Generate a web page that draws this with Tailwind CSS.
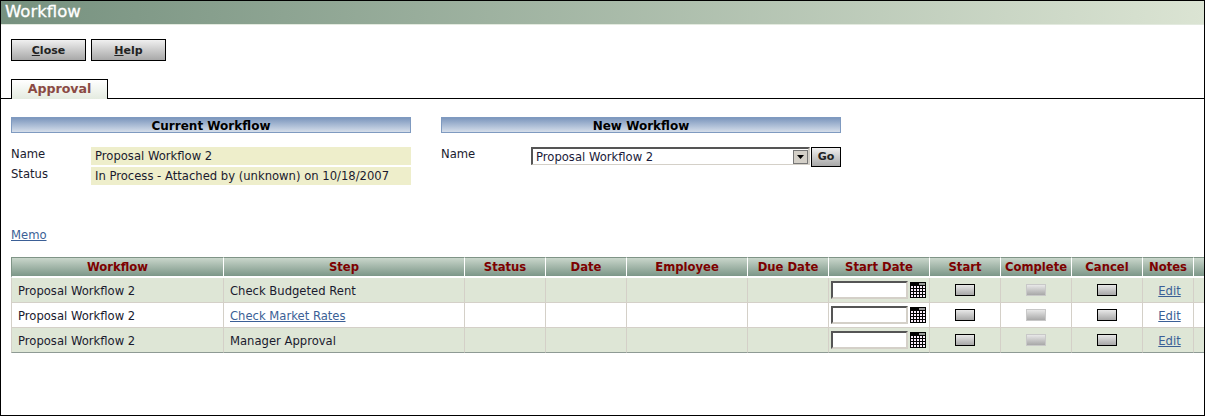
<!doctype html>
<html>
<head>
  <meta charset="UTF-8">
  <script src="https://cdn.jsdelivr.net/npm/@tailwindcss/browser@4"></script>
</head>
<body class="bg-white overflow-hidden">
<div class="w-[1205px] h-[416px] border border-black overflow-hidden font-['DejaVu_Sans',sans-serif] text-[11.6px] text-[#1a1a2e]">
  <div class="h-[24px] pl-[4px] bg-gradient-to-r from-[#76917f] to-[#dbe4d3] border-b border-[#e3eadf] text-white text-[16.5px] leading-[22px] [-webkit-text-stroke:0.3px_white]">Workflow</div>

  <div class="flex gap-[5px] pl-[10px] pt-[14px]">
    <button class="w-[75px] h-[22px] pt-[2px] border border-black bg-gradient-to-b from-[#f0f0f0] to-[#a8a8a8] text-[11px] font-bold text-[#222]"><u>C</u>lose</button>
    <button class="w-[75px] h-[22px] pt-[2px] border border-black bg-gradient-to-b from-[#f0f0f0] to-[#a8a8a8] text-[11px] font-bold text-[#222]"><u>H</u>elp</button>
  </div>

  <div class="mt-[18px] h-[20px] border-b border-black pl-[10px]">
    <div class="w-[97px] h-[20px] border border-black border-b-0 bg-gradient-to-b from-white to-[#e4ebe0] text-center text-[12.6px] font-bold leading-[18px] text-[#8a4a44]">Approval</div>
  </div>

  <div class="flex gap-[30px] pl-[10px] pt-[18px]">
    <div class="w-[400px]">
      <div class="h-[16px] bg-gradient-to-b from-[#7d97bd] to-[#d5deea] border border-[#7f9ac0] text-center text-[12px] font-bold leading-[16px] text-black">Current Workflow</div>
      <div class="flex mt-[14px] h-[18px]">
        <div class="w-[80px] leading-[14px]">Name</div>
        <div class="flex-1 bg-[#eeeecb] pl-[4px] leading-[18px]">Proposal Workflow 2</div>
      </div>
      <div class="flex mt-[2px] h-[18px]">
        <div class="w-[80px] leading-[14px]">Status</div>
        <div class="flex-1 bg-[#eeeecb] pl-[4px] leading-[18px]">In Process - Attached by (unknown) on 10/18/2007</div>
      </div>
    </div>
    <div class="w-[400px]">
      <div class="h-[16px] bg-gradient-to-b from-[#7d97bd] to-[#d5deea] border border-[#7f9ac0] text-center text-[12px] font-bold leading-[16px] text-black">New Workflow</div>
      <div class="flex mt-[14px] h-[20px]">
        <div class="w-[90px] leading-[14px]">Name</div>
        <div class="w-[279px] h-[18px] flex items-center justify-between border-2 border-[#555] border-r-[#d4d0c8] border-b-[#d4d0c8] border-b pl-[3px] text-[#1a1a3a]">
          <span class="pt-[3px]">Proposal Workflow 2</span>
          <span class="w-[15px] h-[14px] flex items-center justify-center bg-[#d4d0c8] border border-[#777]">
            <svg width="7" height="4" viewBox="0 0 7 4"><path d="M0 0h7L3.5 4z" fill="#000"/></svg>
          </span>
        </div>
        <button class="ml-[1px] w-[30px] h-[20px] border border-black bg-gradient-to-b from-[#f0f0f0] to-[#a8a8a8] text-[11px] font-bold text-[#222]">Go</button>
      </div>
    </div>
  </div>

  <div class="mt-[43px] ml-[10px] h-[14px] leading-[14px]"><a class="text-[#3b5f96] underline">Memo</a></div>

  <table class="mt-[15px] ml-[10px] w-[1194px] table-fixed border-separate border-spacing-0">
    <colgroup>
      <col class="w-[213px]"><col class="w-[241px]"><col class="w-[81px]"><col class="w-[81px]"><col class="w-[121px]"><col class="w-[81px]"><col class="w-[101px]"><col class="w-[71px]"><col class="w-[71px]"><col class="w-[71px]"><col class="w-[51px]"><col class="w-[11px]">
    </colgroup>
    <thead>
      <tr class="h-[20px] text-[#7d0000] font-bold">
        <th class="pt-[1px] border-t border-b-2 border-l border-r border-t-[#7f9486] border-b-white border-l-[#7f9486] border-r-white bg-gradient-to-b from-[#c9d6cb] to-[#7c9788]">Workflow</th>
        <th class="pt-[1px] border-t border-b-2 border-r border-t-[#7f9486] border-b-white border-r-white bg-gradient-to-b from-[#c9d6cb] to-[#7c9788]">Step</th>
        <th class="pt-[1px] border-t border-b-2 border-r border-t-[#7f9486] border-b-white border-r-white bg-gradient-to-b from-[#c9d6cb] to-[#7c9788]">Status</th>
        <th class="pt-[1px] border-t border-b-2 border-r border-t-[#7f9486] border-b-white border-r-white bg-gradient-to-b from-[#c9d6cb] to-[#7c9788]">Date</th>
        <th class="pt-[1px] border-t border-b-2 border-r border-t-[#7f9486] border-b-white border-r-white bg-gradient-to-b from-[#c9d6cb] to-[#7c9788]">Employee</th>
        <th class="pt-[1px] border-t border-b-2 border-r border-t-[#7f9486] border-b-white border-r-white bg-gradient-to-b from-[#c9d6cb] to-[#7c9788]">Due Date</th>
        <th class="pt-[1px] border-t border-b-2 border-r border-t-[#7f9486] border-b-white border-r-white bg-gradient-to-b from-[#c9d6cb] to-[#7c9788]">Start Date</th>
        <th class="pt-[1px] border-t border-b-2 border-r border-t-[#7f9486] border-b-white border-r-white bg-gradient-to-b from-[#c9d6cb] to-[#7c9788]">Start</th>
        <th class="pt-[1px] border-t border-b-2 border-r border-t-[#7f9486] border-b-white border-r-white bg-gradient-to-b from-[#c9d6cb] to-[#7c9788]">Complete</th>
        <th class="pt-[1px] border-t border-b-2 border-r border-t-[#7f9486] border-b-white border-r-white bg-gradient-to-b from-[#c9d6cb] to-[#7c9788]">Cancel</th>
        <th class="pt-[1px] border-t border-b-2 border-r border-t-[#7f9486] border-b-white border-r-white bg-gradient-to-b from-[#c9d6cb] to-[#7c9788]">Notes</th>
        <th class="border-t border-b-2 border-t-[#7f9486] border-b-white bg-gradient-to-b from-[#c9d6cb] to-[#7c9788]"></th>
      </tr>
    </thead>
    <tbody id="rows"></tbody>
  </table>
</div>
<script>
  const tbody = document.querySelector('#rows');
  const cal = `<svg class="inline-block align-middle ml-[2px]" width="16" height="16" viewBox="0 0 16 16"><rect width="16" height="16" fill="#000"/><rect x="9" y="1" width="6" height="2" fill="#999"/>` +
    [4,7,10,13].map(y => [1,4,7,10,13].map(x => `<rect x="${x}" y="${y}" width="2" height="2" fill="#fbeefb"/>`).join('')).join('') + `</svg>`;
  const field = `<span class="inline-block align-middle w-[77px] h-[18px] bg-white border-2 border-[#555] border-r-[#d4d0c8] border-b-[#d4d0c8]"></span>`;
  const action = `<span class="block mx-auto w-[20px] h-[12px] border border-black bg-gradient-to-b from-[#e8e8e8] to-[#a8a8a8]"></span>`;
  const disabled = `<span class="block mx-auto w-[20px] h-[12px] border border-[#c8c8c8] bg-gradient-to-b from-[#e8e8e8] to-[#a8a8a8]"></span>`;
  [['Check Budgeted Rent', 'bg-[#dee6d6]', 'border-b-[#d4d0c8]'],
   ['<a class="text-[#3b5f96] underline">Check Market Rates</a>', 'bg-white', 'border-b-[#d4d0c8]'],
   ['Manager Approval', 'bg-[#dee6d6]', 'border-b-[#8e9a94]']].forEach(([step, bg, line]) => {
    const tr = document.createElement('tr');
    tr.className = 'h-[25px] ' + bg;
    const cls = `border-r border-b border-r-[#d4d0c8] ${line} `;
    tr.innerHTML = `
      <td class="${cls} border-l border-l-[#d4d0c8] pl-[6px] pt-[2px]">Proposal Workflow 2</td>
      <td class="${cls} pl-[6px] pt-[2px]">${step}</td>
      <td class="${cls}"></td><td class="${cls}"></td><td class="${cls}"></td><td class="${cls}"></td>
      <td class="${cls} pl-[2px] whitespace-nowrap">${field}${cal}</td>
      <td class="${cls} pb-[1px]">${action}</td>
      <td class="${cls} pb-[1px]">${disabled}</td>
      <td class="${cls} pb-[1px]">${action}</td>
      <td class="${cls} text-center pl-[3px] pt-[2px]"><a class="text-[#3b5f96] underline">Edit</a></td>
      <td class="border-b ${line}"></td>`;
    tbody.appendChild(tr);
  });
</script>
</body>
</html>
